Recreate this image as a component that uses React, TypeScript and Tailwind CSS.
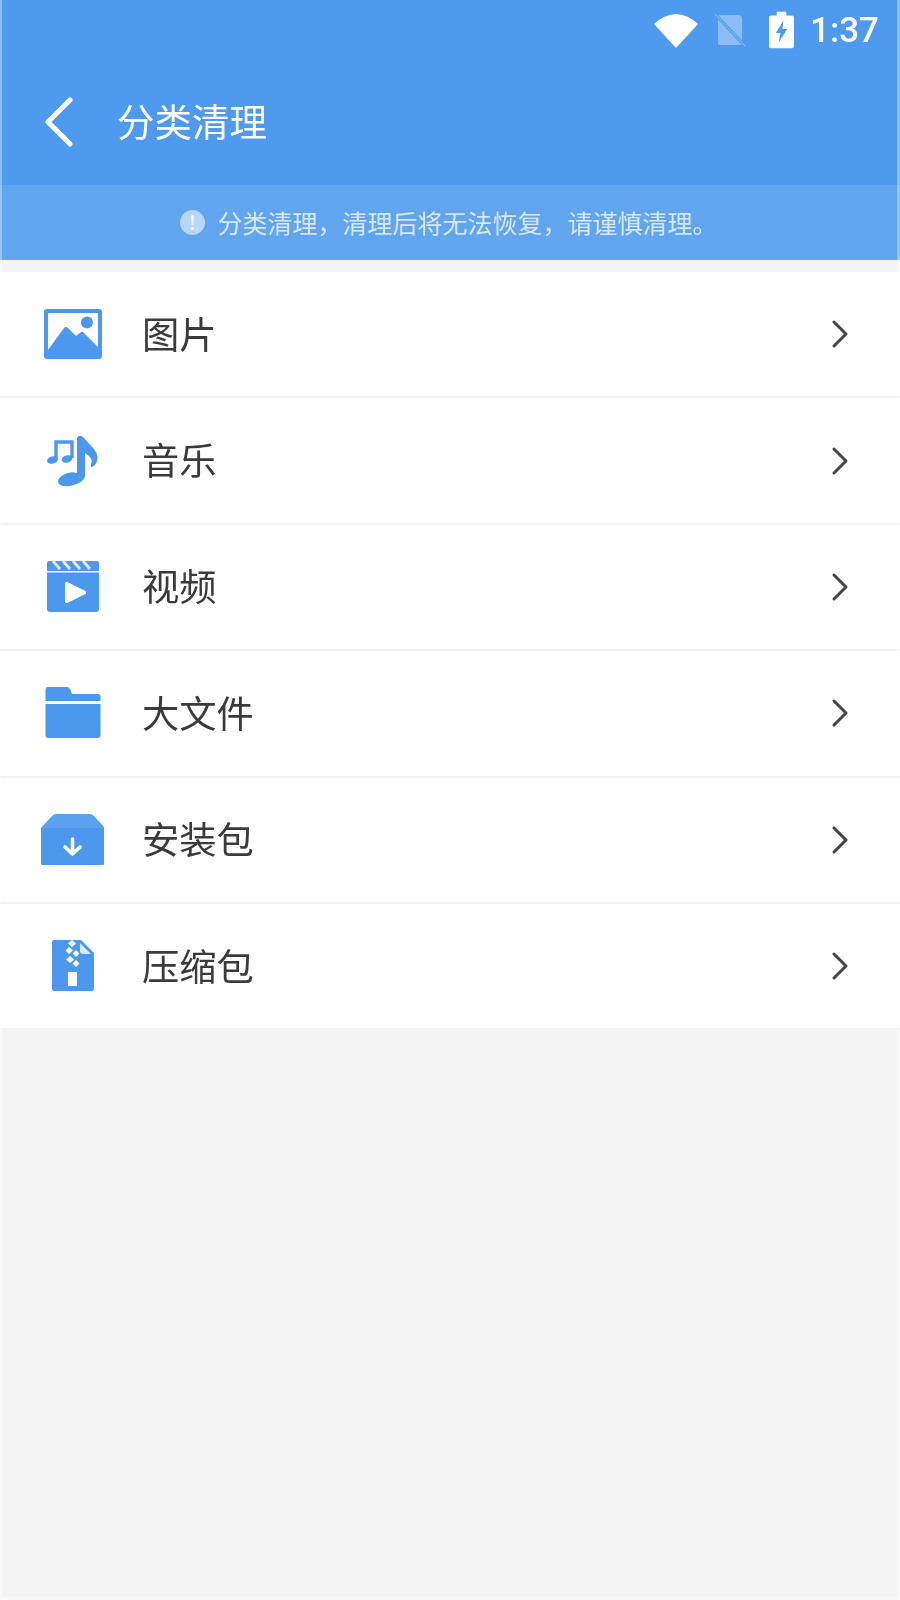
import React from 'react';

const BLUE = '#4b98ee';

const ImageIcon = () => (
  <svg width="58" height="50" viewBox="0 0 58 50">
    <rect x="0" y="0" width="58" height="50" rx="3" fill={BLUE} />
    <rect x="4" y="4" width="50" height="39" fill="#fff" />
    <circle cx="43" cy="13.5" r="6" fill={BLUE} />
    <path d="M4 41 L20 19 Q22 17 24 19 L32 27 L37 23 Q38 22 40 24 L54 38 V44 H4 Z" fill={BLUE} />
  </svg>
);

const MusicIcon = () => (
  <svg width="52" height="52" viewBox="0 0 52 52">
    <path d="M30 3 Q32 -1 36 2 L47 14 Q52 20 50 26 Q49 30 45 32 Q43 32 44 29 Q46 24 42 21 L38 18 V41 Q37 47 27 50 Q16 53 12 49 Q9 44 16 40 Q23 36 30 38 Z" fill={BLUE} />
    <path d="M9 24 V7 H25 V23" fill="none" stroke={BLUE} strokeWidth="3.4" />
    <ellipse cx="5.5" cy="25" rx="5.5" ry="3.6" transform="rotate(-15 5.5 25)" fill={BLUE} />
    <ellipse cx="20" cy="24" rx="5.5" ry="3.6" transform="rotate(-15 20 24)" fill={BLUE} />
  </svg>
);

const VideoIcon = () => (
  <svg width="52" height="52" viewBox="0 0 52 52">
    <path d="M2 0 H50 Q52 0 52 2 V10 H0 V2 Q0 0 2 0 Z" fill={BLUE} />
    <path d="M6 0 L13 8 M16 0 L23 8 M26 0 L33 8 M36 0 L43 8" stroke="#fff" strokeWidth="3" opacity="0.8" />
    <path d="M0 11.5 H52 V48 Q52 51 49 51 H3 Q0 51 0 48 Z" fill={BLUE} />
    <path d="M20 23 L37 31.5 L20 40 Z" fill="#fff" stroke="#fff" strokeWidth="4" strokeLinejoin="round" />
  </svg>
);

const FolderIcon = () => (
  <svg width="56" height="52" viewBox="0 0 56 52">
    <path d="M2.5 0 H22 Q24 0 25 2 L27 7 H53 Q55.5 7 55.5 9.5 V14 H0.5 V2.5 Q0.5 0 2.5 0 Z" fill={BLUE} />
    <path d="M0.5 17 H55.5 V48 Q55.5 51 52.5 51 H3.5 Q0.5 51 0.5 48 Z" fill={BLUE} />
  </svg>
);

const PackageIcon = () => (
  <svg width="64" height="52" viewBox="0 0 64 52">
    <path d="M0 14 L11 2 Q13 0 15 0 H49 Q51 0 53 2 L63 13 V14 Z" fill="#5aa1ef" />
    <path d="M0 14 H63 V50 Q63 51 62 51 H1 Q0 51 0 50 Z" fill={BLUE} />
    <path d="M31.5 25 V40 M24 33 L31.5 40 L39 33" fill="none" stroke="#fff" strokeWidth="3.6" strokeLinecap="round" strokeLinejoin="round" />
  </svg>
);

const ZipIcon = () => (
  <svg width="42" height="52" viewBox="0 0 42 52">
    <path d="M2 0 H29 L42 13 V49 Q42 51 40 51 H2 Q0 51 0 49 V2 Q0 0 2 0 Z" fill={BLUE} />
    <path d="M28 3 L39 14 H31 Q28 14 28 11 Z" fill="#d7e8fc" />
    <path d="M20 0 L24 3.5 L20 7 L16 3.5 Z M17 7 L21 10.5 L17 14 L13.5 10.5 Z M24 10 L27.5 13.5 L24 17 L20.5 13.5 Z M18 16 L22 19.5 L18 23 L14 19.5 Z M24 20 L27.5 23.5 L24 27 L20.5 23.5 Z" fill="#fff" />
    <rect x="16" y="32" width="9" height="14" fill="#fff" />
  </svg>
);

const rows = [
  { label: '图片', Icon: ImageIcon },
  { label: '音乐', Icon: MusicIcon },
  { label: '视频', Icon: VideoIcon },
  { label: '大文件', Icon: FolderIcon },
  { label: '安装包', Icon: PackageIcon },
  { label: '压缩包', Icon: ZipIcon },
];

export default function App() {
  return (
    <div className="relative w-[900px] h-[1600px] overflow-hidden bg-[#f4f4f4] flex flex-col blur-[0.5px] font-['Noto_Sans_CJK_SC','Noto_Sans',sans-serif]">
      <div className="h-[185px] bg-[#4d9aee] flex flex-col shrink-0">
        {/* status bar */}
        <div className="h-[60px] flex items-center justify-end pr-[21px] shrink-0">
          <svg width="44" height="36" viewBox="0 0 44 36">
            <path d="M0 12 Q22 -8 44 12 L22 36 Z" fill="#fff" />
          </svg>
          <svg className="ml-[16px]" width="32" height="34" viewBox="0 0 32 34">
            <path d="M6 2 H24 Q28 2 28 6 V30 Q28 32 26 32 H6 Q4 32 4 30 V4 Q4 2 6 2 Z" fill="#fff" opacity="0.35" />
            <path d="M1 1 L31 33" stroke="#4d9aee" strokeWidth="3" />
            <path d="M1 1 L31 33" stroke="#fff" strokeWidth="1" opacity="0.4" />
          </svg>
          <svg className="ml-[23px]" width="25" height="38" viewBox="0 0 26 38">
            <path d="M8 0 H18 V4 H24 Q26 4 26 6 V36 Q26 38 24 38 H2 Q0 38 0 36 V6 Q0 4 2 4 H8 Z" fill="#fff" />
            <path d="M15 9 L7 22 H12 L10 32 L19 18 H14 Z" fill="#4d9aee" />
          </svg>
          <span className="ml-[16px] text-[35px] leading-none font-medium text-white font-['Roboto',sans-serif]">1:37</span>
        </div>
        {/* title */}
        <div className="flex-1 flex items-center pl-[45px] pb-[2px]">
          <svg width="28" height="50" viewBox="0 0 28 50">
            <path d="M25 3 L3 25 L25 47" fill="none" stroke="#fff" strokeWidth="5" strokeLinecap="round" strokeLinejoin="round" />
          </svg>
          <span className="ml-[44px] mb-[3px] text-[37.5px] leading-none text-white">分类清理</span>
        </div>
      </div>

      {/* warning */}
      <div className="h-[75px] bg-[#62a5ef] flex items-center justify-center shrink-0 pr-[2px]">
        <svg width="25" height="25" viewBox="0 0 25 25">
          <circle cx="12.5" cy="12.5" r="12.5" fill="#fff" opacity="0.55" />
          <path d="M11 5 H14 L13.4 15 H11.6 Z" fill="#fff" opacity="0.8" />
          <circle cx="12.5" cy="18.5" r="1.6" fill="#fff" opacity="0.8" />
        </svg>
        <span className="ml-[12px] text-[25px] leading-none text-white/75">分类清理，清理后将无法恢复，请谨慎清理。</span>
      </div>

      <div className="mt-[12px] bg-white flex flex-col">
        {rows.map(({ label, Icon }) => (
          <div key={label} className="h-[126.4px] border-b-2 border-[#f3f3f3] flex items-center pl-[41px] pr-[51px]">
            <div className="w-[64px] flex justify-center">
              <Icon />
            </div>
            <span className="ml-[37px] pb-[2px] flex-1 text-[37.3px] leading-none text-[#3a3a3a]">{label}</span>
            <svg width="18" height="30" viewBox="0 0 18 30">
              <path d="M3 3 L15 15 L3 27" fill="none" stroke="#444444" strokeWidth="3" strokeLinecap="round" strokeLinejoin="round" />
            </svg>
          </div>
        ))}
      </div>

      {/* pale edge of the capture */}
      <div className="absolute inset-0 pointer-events-none border-l-2 border-r-[3px] border-b-[3px] border-white/35" />
    </div>
  );
}
